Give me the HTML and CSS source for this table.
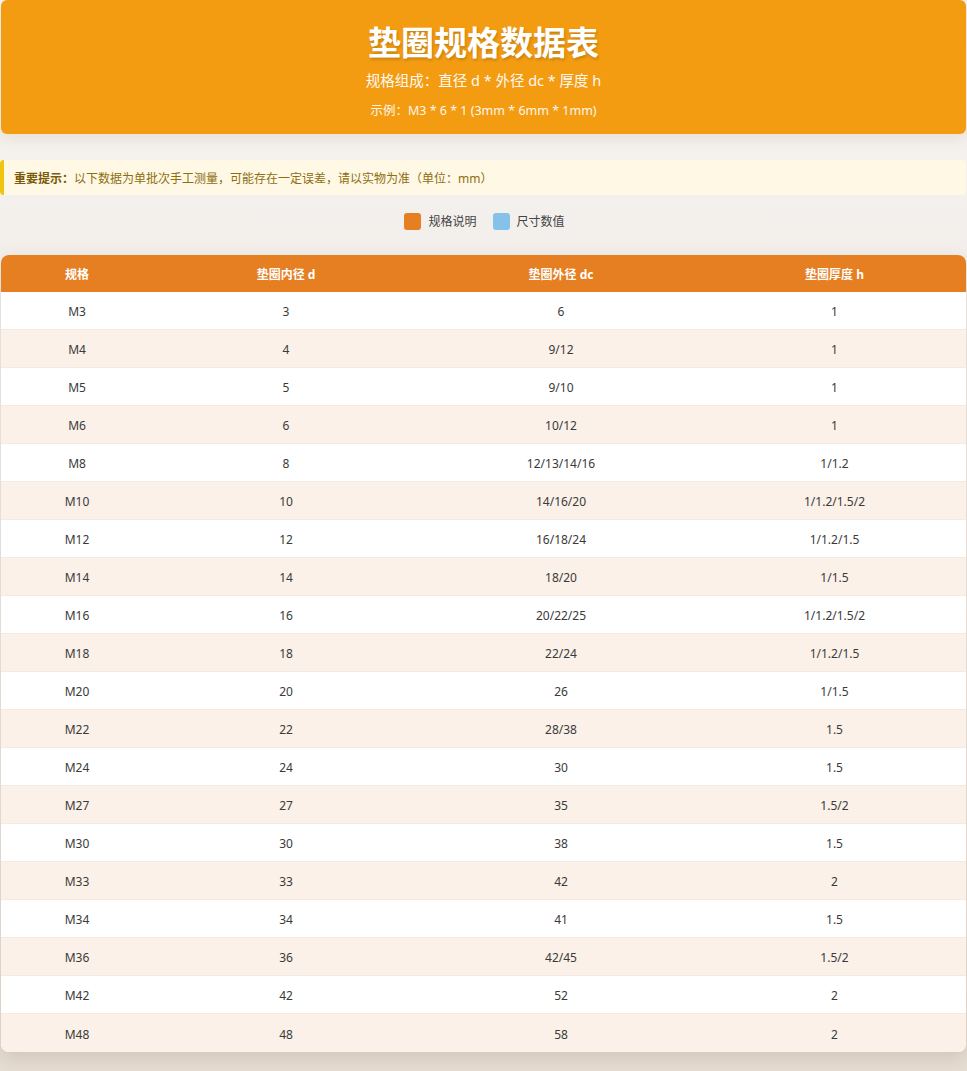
FILE: index.html
```html
<!DOCTYPE html>
<html lang="zh">
<head>
<meta charset="utf-8">
<title>垫圈规格数据表</title>
<link rel="stylesheet" href="styles.css">
</head>
<body>
<div class="page">
  <header class="hero">
    <h1>垫圈规格数据表</h1>
    <p class="sub">规格组成：直径 d * 外径 dc * 厚度 h</p>
    <p class="example">示例：M3 * 6 * 1 (3mm * 6mm * 1mm)</p>
  </header>
  <div class="note"><strong>重要提示：</strong>以下数据为单批次手工测量，可能存在一定误差，请以实物为准（单位：mm）</div>
  <div class="legend">
    <span class="item"><i class="sw orange"></i>规格说明</span>
    <span class="item"><i class="sw blue"></i>尺寸数值</span>
  </div>
  <table class="data">
    <colgroup><col class="c1"><col class="c2"><col class="c3"><col class="c4"></colgroup>
    <thead><tr><th>规格</th><th>垫圈内径 d</th><th>垫圈外径 dc</th><th>垫圈厚度 h</th></tr></thead>
    <tbody>
      <tr><td>M3</td><td>3</td><td>6</td><td>1</td></tr>
      <tr><td>M4</td><td>4</td><td>9/12</td><td>1</td></tr>
      <tr><td>M5</td><td>5</td><td>9/10</td><td>1</td></tr>
      <tr><td>M6</td><td>6</td><td>10/12</td><td>1</td></tr>
      <tr><td>M8</td><td>8</td><td>12/13/14/16</td><td>1/1.2</td></tr>
      <tr><td>M10</td><td>10</td><td>14/16/20</td><td>1/1.2/1.5/2</td></tr>
      <tr><td>M12</td><td>12</td><td>16/18/24</td><td>1/1.2/1.5</td></tr>
      <tr><td>M14</td><td>14</td><td>18/20</td><td>1/1.5</td></tr>
      <tr><td>M16</td><td>16</td><td>20/22/25</td><td>1/1.2/1.5/2</td></tr>
      <tr><td>M18</td><td>18</td><td>22/24</td><td>1/1.2/1.5</td></tr>
      <tr><td>M20</td><td>20</td><td>26</td><td>1/1.5</td></tr>
      <tr><td>M22</td><td>22</td><td>28/38</td><td>1.5</td></tr>
      <tr><td>M24</td><td>24</td><td>30</td><td>1.5</td></tr>
      <tr><td>M27</td><td>27</td><td>35</td><td>1.5/2</td></tr>
      <tr><td>M30</td><td>30</td><td>38</td><td>1.5</td></tr>
      <tr><td>M33</td><td>33</td><td>42</td><td>2</td></tr>
      <tr><td>M34</td><td>34</td><td>41</td><td>1.5</td></tr>
      <tr><td>M36</td><td>36</td><td>42/45</td><td>1.5/2</td></tr>
      <tr><td>M42</td><td>42</td><td>52</td><td>2</td></tr>
      <tr><td>M48</td><td>48</td><td>58</td><td>2</td></tr>
    </tbody>
  </table>
</div>
</body>
</html>
```
FILE: styles.css
```css
html, body {
  margin: 0;
  padding: 0;
}
body {
  min-height: 1071px;
  background: linear-gradient(180deg, #f5f3f1 0%, #efe9e3 60%, #e6ddd3 100%);
  font-family: "Noto Sans", "Noto Sans CJK SC", sans-serif;
  color: #333;
}
.page {
  margin: 0 1px;
  padding-bottom: 19px;
}
.hero {
  background: #f39c12;
  border-radius: 6px;
  color: #fff;
  text-align: center;
  height: 134px;
  box-sizing: border-box;
  padding-top: 19px;
  box-shadow: 0 4px 14px rgba(180, 140, 90, 0.18);
}
.hero h1 {
  margin: 0;
  font-family: "Noto Sans CJK SC", sans-serif;
  font-size: 33px;
  line-height: 44px;
  font-weight: 700;
  text-shadow: 1px 2px 3px rgba(0,0,0,0.18);
}
.hero .sub {
  margin: 4px 0 0;
  font-size: 14.5px;
  line-height: 26px;
  opacity: 0.95;
}
.hero .example {
  margin: 8px 0 0;
  font-size: 12.5px;
  line-height: 20px;
  opacity: 0.92;
}
.note {
  margin-top: 26px;
  margin-left: -1px;
  background: #fff8e4;
  border-left: 4px solid #f1c40f;
  border-radius: 4px;
  height: 35px;
  box-sizing: border-box;
  padding: 0 0 0 10px;
  display: flex;
  align-items: center;
  font-size: 12px;
  color: #8d6e12;
}
.note strong {
  font-weight: 700;
  color: #7a5a08;
}
.legend {
  display: flex;
  justify-content: center;
  gap: 16px;
  height: 52px;
  align-items: center;
  font-size: 12px;
  color: #444;
  margin-left: 2px;
}
.legend .item {
  display: flex;
  align-items: center;
  gap: 7px;
}
.sw {
  display: inline-block;
  width: 17px;
  height: 17px;
  border-radius: 3px;
}
.sw.orange { background: #e67e22; }
.sw.blue { background: #85c1e9; }
.data {
  margin-top: 8px;
  width: 100%;
  border-collapse: separate;
  border-spacing: 0;
  table-layout: fixed;
  background: #fff;
  border-radius: 8px;
  overflow: hidden;
  box-shadow: 0 6px 18px rgba(120, 90, 60, 0.18);
}
col.c1 { width: 152px; }
col.c2 { width: 266px; }
col.c3 { width: 284px; }
col.c4 { width: 263px; }
.data th {
  background: #e67e22;
  color: #fff;
  font-weight: 700;
  font-size: 12px;
  height: 37px;
  padding: 0;
  text-align: center;
}
.data td {
  height: 38px;
  padding: 2px 0 0;
  text-align: center;
  font-size: 12px;
  color: #3a3a3a;
  border-bottom: 1px solid #f3ebe3;
  box-sizing: border-box;
}
.data tbody tr:nth-child(even) td {
  background: #fbf1e9;
}
.data tbody tr:last-child td {
  border-bottom: none;
}
```
